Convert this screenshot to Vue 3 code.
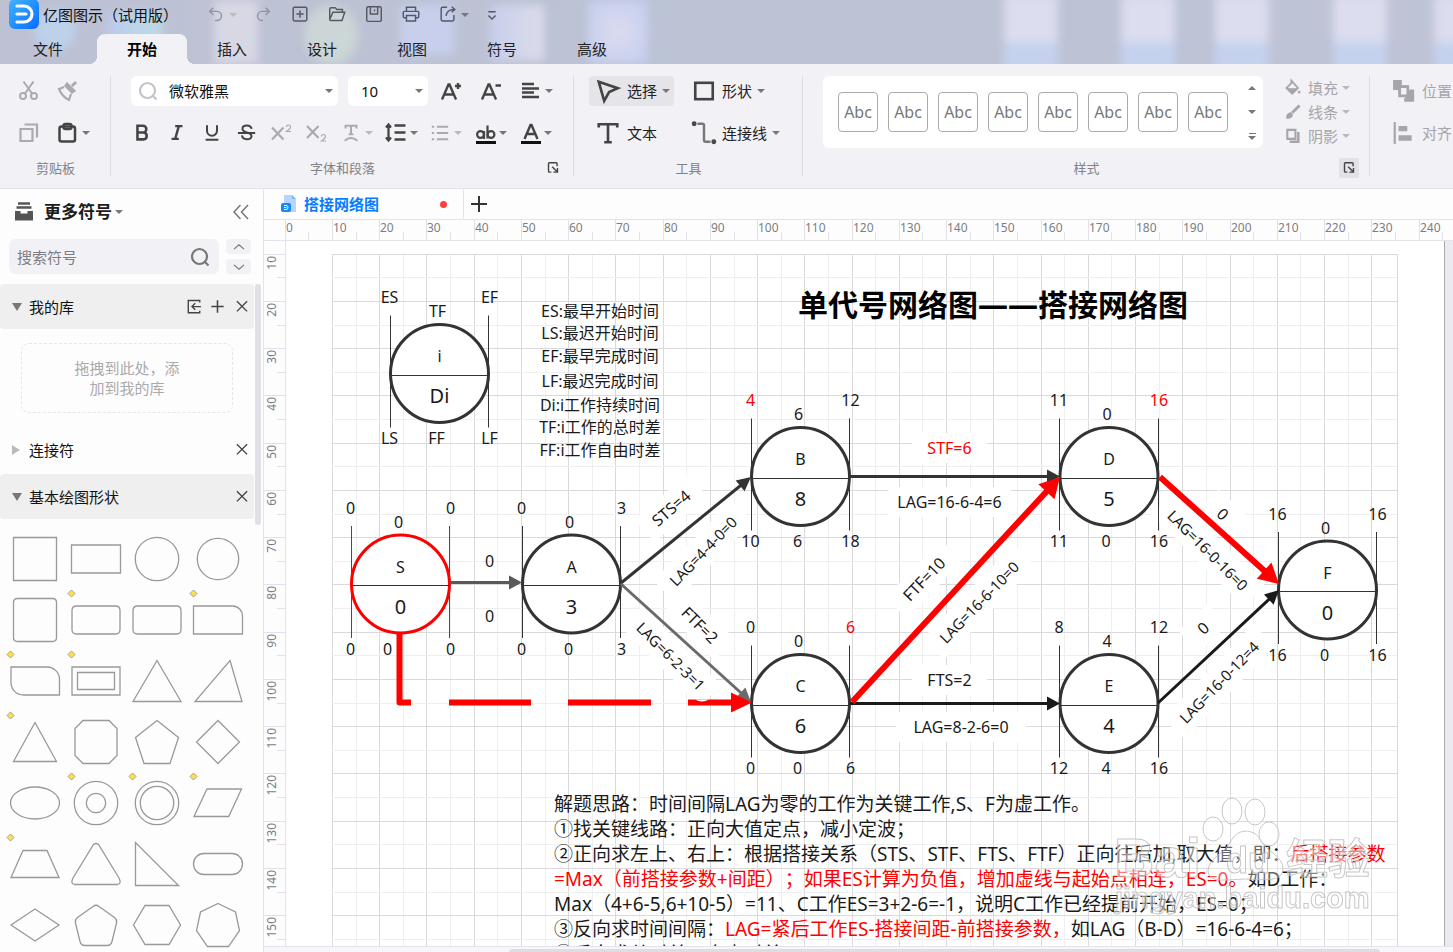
<script setup>
import { h } from 'vue'

const glyphs = {
  undo: '<path d="M7 2 3 6l4 4M3 6h8a5 5 0 0 1 0 10H9"/>',
  redo: '<path d="m13 2 4 4-4 4M17 6H9a5 5 0 0 0 0 10h1"/>',
  create: '<rect x="2.5" y="1.5" width="15" height="15" rx="1.5"/><path d="M10 5v8M6 9h8"/>',
  open: '<path d="M2 15V3.500q0-1.500 1.500-1.500H8l2 2h6v3M2 15q0 1 1 1h12.500l3-9H5.500L2 15"/>',
  save: '<rect x="2" y="1" width="16" height="16" rx="1.500"/><path d="M6 1v8h8V1M10.500 4v2"/>',
  print: '<path d="M5 6V1.500h10V6M5 13H2.500q-1 0-1-1V7q0-1 1-1h15q1 0 1 1v5q0 1-1 1H15M5 10.500h10v6H5z"/>',
  share: '<path d="M9 1.500H4q-1.500 0-1.500 1.500v12q0 1.500 1.500 1.500h11q1.500 0 1.500-1.500v-5M8 11c0-4 3-7 9-7M14 1l3.500 3L14 7"/>',
  more: '<path d="M6 6.500h8M6 10.500l4 4 4-4"/>',
  cut: '<g stroke-width="2"><circle cx="4" cy="15" r="3"/><circle cx="15" cy="15" r="3"/><path d="m4.500 .5 8.500 12M14.500 .5 6 12.500"/></g>',
  brush: '<path d="m18 1-4 4" stroke-width="3"/><path d="m9 2 8 8-3 2-7-7z" fill="currentColor"/><path d="m6 6-5 2c2 5 6 9 10 11l2-6" stroke-width="2.200"/>',
  copy: '<g stroke-width="2.200"><path d="M1.500 6h12v12h-12z"/><path d="M5.500 1.500h12.500v13" /></g>',
  paste: '<g stroke-width="2.500"><rect x="1.500" y="3.500" width="15.500" height="15" rx="2"/><rect x="5.500" y="1" width="8" height="5" rx="2"/></g>',
  search: '<circle cx="9.500" cy="9.500" r="7.500" stroke-width="2.200"/><path d="m15 15 3.500 3.500" stroke-width="2.200"/>',
  grow: '<path d="M0 18.500 6.500 3.500h1L14 18.500M2.500 13.500h9M13 5h6M16 2v6" stroke-width="2.400"/>',
  shrink: '<path d="M0 18.500 6.500 3.500h1L14 18.500M2.500 13.500h9M13.500 4.500h5.500" stroke-width="2.400"/>',
  align: '<path d="M0 3h12M0 7.500h17M0 11.500h12M0 16h17" stroke-width="2.600"/>',
  bold: '<path d="M5 2h6a3.700 3.700 0 0 1 0 7.500H5zM5 9.500h7a3.800 3.800 0 0 1 0 7.500H5z" stroke-width="2.800"/>',
  italic: '<path d="M8 2.500h8M4 16.500h8M12 2.500 8 16.500" stroke-width="2.600"/>',
  under: '<path d="M4.500 1.500v6a5.500 5.500 0 0 0 11 0v-6M3 17.500h14" stroke-width="2.200"/>',
  strike: '<path d="M15 5.500c-.5-5-10-5-10-.5C5 7.500 7 8.500 10 9.500c3 .8 5 1.500 5 4.200 0 4.500-10 4.500-10.500-1M0 10h19" stroke-width="2.200"/>',
  sup: '<path d="m0 4.500 11.500 12M11.500 4.500 0 16.500" stroke-width="2.200"/><path d="M14.500 4q0-2 2-2t2 2q0 1.500-4 4.500h4.500" stroke-width="1.200"/>',
  sub: '<path d="m0 3 11.500 12M11.500 3 0 15" stroke-width="2.200"/><path d="M14.500 13.500q0-2 2-2t2 2q0 1.500-4 4.500h4.500" stroke-width="1.200"/>',
  arc: '<path d="M4 5V2h12v3M10 2v9M7.500 11.500h5M3 18.500q7-6 14 0" stroke-width="2.200"/>',
  spacing: '<path d="M8.500 2.500h11M8.500 9.500h11M8.500 16.500h11M2.500 1.500v16M0 4.500l2.500-3 2.500 3M0 14.500l2.500 3 2.500-3" stroke-width="2.300"/>',
  list: '<path d="M6.500 3H19M6.500 10H19M6.500 17H19M1 3h2.500M1 10h2.500M1 17h2.500" stroke-width="2.200"/>',
  mark: '<path d="M1 19.500h20" stroke="#111" stroke-width="3"/><circle cx="5.500" cy="11.500" r="3.400" stroke-width="2.200"/><circle cx="16" cy="11.500" r="3.400" stroke-width="2.200"/><path d="M9 8v8M12.500 2.500v13" stroke-width="2.200"/>',
  tint: '<path d="M1 19.500h20" stroke="#111" stroke-width="3"/><path d="m4.500 16 6-14h1l6 14M7 11h8" stroke-width="2.400"/>',
  launch: '<path d="M15 8V4.500q0-1-1-1H5.500q-1 0-1 1V14q0 1 1 1H8M9 8.500l6.500 6.500M15.500 10v5h-5" stroke-width="1.700"/>',
  cursor: '<path d="M1.500 1.500 19 7.500l-8 3.500-4.500 8z" stroke-width="2.400"/>',
  square: '<rect x="2" y="2.500" width="16" height="15" stroke-width="2.400"/>',
  text: '<path d="M1.500 5V2h17v3M10 2v16.500M6.500 18.500h7" stroke-width="2.400"/>',
  link: '<circle cx="1" cy="1.500" r="1" stroke-width="2.500"/><circle cx="19" cy="18" r="1" stroke-width="2.500"/><path d="M4 1.500h4.500q1.500 0 1.500 1.500v13.500q0 1.500 1.500 1.500H16" stroke="#777" stroke-width="2.200"/>',
  fill: '<path d="m8 1 8 9-7 7-7-7 6-6z" stroke-width="2.200"/><path d="M3 11h12l-6 5.500z" fill="currentColor"/><path d="M17.500 13.500v3" stroke-width="3"/>',
  line: '<path d="m18 2-9 9" stroke-width="3.500"/><path d="M7 11q-5 1-4.500 6.500Q9 17.500 9 13z" fill="currentColor"/>',
  shadow: '<path d="M3 2.500h10v11H3z" stroke-width="2.500"/><path d="M16.500 5v12H6" stroke-width="3"/>',
  place: '<path d="M0 0h8v5h5v8H5V9H0z" fill="currentColor" stroke="none"/><path d="M6 6h7.500v8.500H6z" fill="#f2f1f6" stroke-width="2.500"/><path d="M15 9.500h3.500V19H11v-2.500" fill="currentColor"/>',
  sides: '<path d="M1.500 0v20" stroke-width="2"/><path d="M5 6h8M5 14.500h12" stroke-width="5"/>',
  box: '<path d="M4 1.500h12M2.500 5.500h15" stroke-width="2.400"/><path d="M1 9h5.500v2.500h7V9H19v9.500H1z" fill="currentColor" stroke="none"/>',
  collapse: '<path d="M9.500 3 3 10l6.500 7M17 3l-6.500 7 6.500 7" stroke-width="1.500"/>',
  up: '<path d="m3 13 7-6 7 6"/>',
  down: '<path d="m3 7 7 6 7-6"/>',
  imp: '<path d="M17 4.500V2H3v15h14v-2.500M18.500 9.500H8M11.500 5.500l-4 4 4 4" stroke-width="1.700"/>',
  plus: '<path d="M10 2v16M2 10h16" stroke-width="2"/>',
  close: '<path d="m3 2 14 14M17 2 3 16" stroke-width="1.900"/>',
}
const Ico = (p) => h('svg', { class: 'ico', viewBox: '-1 -1 22 22', width: p.s || 22, height: p.s || 22, 'aria-hidden': 'true', innerHTML: glyphs[p.n] })
Ico.props = ['n', 's']

const tabs = ['文件', '开始', '插入', '设计', '视图', '符号', '高级']
const styleRows = [['fill', '填充'], ['line', '线条'], ['shadow', '阴影']]

const shapes = [
  { d: 'M-21.500-21.500h43v43h-43z' }, { d: 'M-24.500-14h49v28h-49z' }, { r: [21.7] }, { r: [20.7] },
  { d: 'M-17.500-21.500h35q4 0 4 4v35q0 4-4 4h-35q-4 0-4-4v-35q0-4 4-4z' },
  { d: 'M-19.500-14h39q4.500 0 4.500 4.500v19q0 4.500-4.500 4.500h-39q-4.500 0-4.500-4.500v-19q0-4.500 4.500-4.500z', m: 1 },
  { d: 'M-19.500-14h39q4.500 0 4.500 4.500v19q0 4.500-4.500 4.500h-39q-4.500 0-4.500-4.500v-19q0-4.500 4.500-4.500z' },
  { d: 'M-24.500-14h39a10 10 0 0 1 10 10v18h-49z', m: 1 },
  { d: 'M-24-14h36a12.500 12.500 0 0 1 12.500 12.500v15.500h-36a12.500 12.500 0 0 1-12.500-12.500z', m: 1 },
  { d: 'M-24-14h48v28h-48zM-18.500-8.500h37v17h-37z', m: 1 },
  { d: 'M0-20.500 24 20.500h-48z' }, { d: 'M12-20.500 24 20.500h-47z' },
  { d: 'M0-19.500 21.500 19.500h-43z', m: 1 },
  { d: 'M-13-21.500h26l8 8v27l-8 8h-26l-8-8v-27z' },
  { d: 'M0-21.500 21.500-4.500 13 21.500h-26L-21.500-4.500z' }, { d: 'M0-21.500 21.500 0 0 21.500-21.500 0z' },
  { d: 'M-24.500 0a24.500 16 0 0 1 49 0a24.500 16 0 0 1-49 0' }, { r: [21.7, 9.7], m: 1 }, { r: [21.7, 16.7], m: 1 },
  { d: 'M-11-14h34.500L10.700 13.500H-24z', m: 1 },
  { d: 'M-12-13.500h24l12 27h-48z', m: 1 },
  { d: 'M-2.500-19.500q2.500-2 5 0L23 14q3 6-2 6.500h-42q-5-.5-2-6.500z' },
  { d: 'M-21.500-21.500v43h43z' }, { d: 'M-14-10.500h28a10.500 10.500 0 0 1 0 21h-28a10.500 10.500 0 0 1 0-21z' },
  { d: 'M0-16 24 0 0 16-24 0z' },
  { d: 'M-3-18.500q3-2.500 6 0L18.500-7.500q3 2.500 2 5.500L16 16.500q-1 4-5 4h-22q-4 0-5-4L-20.500-2q-1-3 2-5.500z' },
  { d: 'M-12-19.500h24L23.500 0 12 19.500h-24L-23.500 0z' },
  { d: 'M0-21.500 17.500-13l4 18.500-11 16h-21l-11-16 4-18.500z' },
]

const STEP = 47.244
const hx = (k) => Math.floor(285.2 + STEP * k)
const vy = (k) => Math.round(206.5 + STEP * k)
const hTicks = Array.from({ length: 25 }, (_, i) => ({ x: hx(i), half: hx(i + 0.5), v: i * 10 }))
const vTicks = Array.from({ length: 15 }, (_, i) => ({ y: vy(i + 1), half: vy(i + 1.5), v: (i + 1) * 10 }))
const gridX = Array.from({ length: 45 }, (_, i) => ({ p: hx(1 + i / 2), major: i % 2 === 0 }))
const gridY = Array.from({ length: 30 }, (_, i) => ({ p: vy(1 + i / 2), major: i % 2 === 0 }))

const nodes = [
  { x: 439.5, y: 373.5, n: 'i', v: 'Di', t: ['ES', 'TF', 'EF'], b: ['LS', 'FF', 'LF'] },
  { x: 400.5, y: 584, n: 'S', v: '0', t: ['0', '0', '0'], b: ['0', '0', '0'], red: true, mid: -13 },
  { x: 571.5, y: 584, n: 'A', v: '3', t: ['0', '0', '3'], b: ['0', '0', '3'] },
  { x: 800.5, y: 476.5, n: 'B', v: '8', t: ['4', '6', '12'], b: ['10', '6', '18'], hot: 0 },
  { x: 800.5, y: 703.5, n: 'C', v: '6', t: ['0', '0', '6'], b: ['0', '0', '6'], hot: 2 },
  { x: 1109, y: 476.5, n: 'D', v: '5', t: ['11', '0', '16'], b: ['11', '0', '16'], hot: 2 },
  { x: 1109, y: 703.5, n: 'E', v: '4', t: ['8', '4', '12'], b: ['12', '4', '16'] },
  { x: 1327.5, y: 590, n: 'F', v: '0', t: ['16', '0', '16'], b: ['16', '0', '16'] },
]
const offs = (n, i, bottom) => n.x + [-50, bottom ? n.mid || -3 : -2, 50][i]

const edge = (x1, y1, x2, y2, c, w, len, half) => {
  const L = Math.hypot(x2 - x1, y2 - y1)
  const a = (Math.atan2(y2 - y1, x2 - x1) * 180) / Math.PI
  return { x1, y1, a, L, c, w, len, half }
}
const edges = [
  edge(450, 582.5, 522, 582.5, '#595959', 3, 13, 7),
  edge(621, 583, 751, 477, '#333', 3, 14, 7),
  edge(621, 584, 751, 702, '#6a6a6a', 3, 14, 7),
  edge(850, 476.5, 1060, 476.5, '#333', 3, 13, 7),
  edge(850, 703.5, 1060, 703.5, '#1a1a1a', 3, 13, 7),
  edge(1158, 703, 1279, 590, '#1a1a1a', 3, 14, 7),
  edge(852, 702, 1060, 477, '#f00', 6, 20, 11),
  edge(1160, 477, 1279, 584, '#f00', 6, 20, 11),
]
const labels = [
  { x: 489.5, y: 561, t: '0' }, { x: 489.5, y: 616, t: '0' },
  { x: 671, y: 508, t: 'STS=4', a: -41, w: 70 }, { x: 703, y: 551, t: 'LAG=4-4-0=0', a: -46, w: 112, sm: true },
  { x: 700, y: 625, t: 'FTF=2', a: 45, w: 70 }, { x: 671, y: 656, t: 'LAG=6-2-3=1', a: 45, w: 112, sm: true },
  { x: 949.5, y: 448, t: 'STF=6', w: 75, red: true }, { x: 949.5, y: 502, t: 'LAG=16-6-4=6', w: 122 },
  { x: 924, y: 579, t: 'FTF=10', a: -46, w: 80 }, { x: 979, y: 602, t: 'LAG=16-6-10=0', a: -46, w: 130, sm: true },
  { x: 949.5, y: 680, t: 'FTS=2', w: 75 }, { x: 961, y: 727, t: 'LAG=8-2-6=0', w: 130 },
  { x: 1223, y: 514, t: '0', a: 43, w: 40 }, { x: 1208, y: 550, t: 'LAG=16-0-16=0', a: 45, w: 130, sm: true },
  { x: 1203, y: 628, t: '0', a: -43, w: 40 }, { x: 1219, y: 682, t: 'LAG=16-0-12=4', a: -46, w: 130, sm: true },
]
const legend = [
  [311, 'ES:最早开始时间'], [333, 'LS:最迟开始时间'], [356, 'EF:最早完成时间'], [381, 'LF:最迟完成时间'],
  [405, 'Di:i工作持续时间'], [427, 'TF:i工作的总时差'], [450, 'FF:i工作自由时差'],
]
</script>

<template>
  <div class="app">
    <header class="top">
      <div class="blobs" aria-hidden="true"><i v-for="n in 12" :key="n" :class="'b' + n"></i></div>
      <div class="title">
        <svg class="logo" width="30" height="30" viewBox="0 0 30 30" aria-hidden="true">
          <defs><linearGradient id="lg" x1="0" y1="0" x2="1" y2="1"><stop offset="0" stop-color="#3fb4ff" /><stop offset="1" stop-color="#0a6cff" /></linearGradient></defs>
          <rect width="30" height="30" rx="6" fill="url(#lg)" />
          <path d="M8 7h7a8 8 0 0 1 0 16H8M8 15h9" fill="none" stroke="#fff" stroke-width="3.200" stroke-linecap="round" />
        </svg>
        <h1>亿图图示（试用版）</h1>
        <nav class="quick">
          <button class="q dim" aria-label="撤销"><Ico n="undo" s="20" /><b class="car"></b></button>
          <button class="q dim" aria-label="重做"><Ico n="redo" s="20" /></button>
          <button class="q" aria-label="新建"><Ico n="create" s="20" /></button>
          <button class="q" aria-label="打开"><Ico n="open" s="20" /></button>
          <button class="q" aria-label="保存"><Ico n="save" s="20" /></button>
          <button class="q" aria-label="打印"><Ico n="print" s="20" /></button>
          <button class="q exp" aria-label="导出"><Ico n="share" s="20" /><b class="car"></b></button>
          <button class="q" aria-label="更多"><Ico n="more" s="20" /></button>
        </nav>
      </div>
      <nav class="tabs">
        <button v-for="t in tabs" :key="t" :class="{ on: t === '开始' }">{{ t }}</button>
      </nav>
    </header>

    <section class="ribbon">
      <div class="group clip">
        <div class="rows">
          <div class="row"><button class="ib dim" aria-label="剪切"><Ico n="cut" /></button><button class="ib dim" aria-label="格式刷"><Ico n="brush" /></button></div>
          <div class="row"><button class="ib dim" aria-label="复制"><Ico n="copy" /></button><button class="ib cc" aria-label="粘贴"><Ico n="paste" /><b class="car"></b></button></div>
        </div>
        <footer>剪贴板</footer>
      </div>
      <div class="group font">
        <div class="rows">
          <div class="row">
            <label class="combo name"><Ico n="search" /><select aria-label="字体"><option>微软雅黑</option></select><b class="car"></b></label>
            <label class="combo size"><select aria-label="字号"><option>10</option></select><b class="car"></b></label>
            <button class="ib" aria-label="增大"><Ico n="grow" /></button>
            <button class="ib" aria-label="减小"><Ico n="shrink" /></button>
            <button class="ib cc" aria-label="对齐方式"><Ico n="align" /><b class="car"></b></button>
          </div>
          <div class="row tight">
            <button class="ib" aria-label="加粗"><Ico n="bold" s="20" /></button>
            <button class="ib" aria-label="斜体"><Ico n="italic" s="20" /></button>
            <button class="ib" aria-label="下划线"><Ico n="under" s="20" /></button>
            <button class="ib" aria-label="删除线"><Ico n="strike" s="20" /></button>
            <button class="ib dim" aria-label="上标"><Ico n="sup" /></button>
            <button class="ib dim" aria-label="下标"><Ico n="sub" /></button>
            <button class="ib cc dim" aria-label="弧形文字"><Ico n="arc" s="20" /><b class="car"></b></button>
            <button class="ib cc" aria-label="行距"><Ico n="spacing" /><b class="car"></b></button>
            <button class="ib cc dim" aria-label="项目符号"><Ico n="list" s="20" /><b class="car"></b></button>
            <button class="ib cc" aria-label="突出显示"><Ico n="mark" /><b class="car"></b></button>
            <button class="ib cc" aria-label="字体颜色"><Ico n="tint" /><b class="car"></b></button>
          </div>
        </div>
        <footer>字体和段落<button class="go" aria-label="字体设置"><Ico n="launch" s="18" /></button></footer>
      </div>
      <div class="group tools">
        <div class="rows">
          <div class="row"><button class="tb sel"><Ico n="cursor" s="24" />选择<b class="car"></b></button><button class="tb two"><Ico n="square" s="24" />形状<b class="car"></b></button></div>
          <div class="row"><button class="tb first"><Ico n="text" s="24" />文本</button><button class="tb two"><Ico n="link" s="24" />连接线<b class="car"></b></button></div>
        </div>
        <footer>工具</footer>
      </div>
      <div class="group styles">
        <div class="rows side">
          <div class="gallery">
            <button v-for="n in 8" :key="n" class="sw">Abc</button>
            <div class="spin"><button aria-label="上"><b class="car flip"></b></button><button aria-label="下"><b class="car"></b></button><button aria-label="展开" class="bar"><b class="car"></b></button></div>
          </div>
          <div class="stack">
            <button v-for="r in styleRows" :key="r[0]"><Ico :n="r[0]" s="18" />{{ r[1] }}<b class="car"></b></button>
          </div>
        </div>
        <footer>样式<button class="go grey" aria-label="样式设置"><Ico n="launch" s="18" /></button></footer>
      </div>
      <div class="group arrange">
        <div class="rows">
          <div class="row"><button class="tb dim"><Ico n="place" s="24" />位置</button></div>
          <div class="row"><button class="tb dim"><Ico n="sides" s="24" />对齐</button></div>
        </div>
      </div>
    </section>

    <main class="work">
      <aside class="side-panel">
        <div class="lib-head"><Ico n="box" /><h2>更多符号</h2><b class="car"></b><button aria-label="收起"><Ico n="collapse" /></button></div>
        <div class="find">
          <label><input type="text" placeholder="搜索符号" aria-label="搜索符号" /><Ico n="search" /></label>
          <div class="ud"><button aria-label="上一个"><Ico n="up" s="16" /></button><button aria-label="下一个"><Ico n="down" s="16" /></button></div>
        </div>
        <div class="lists">
          <div class="sec grey"><b class="tri"></b><h3>我的库</h3><button aria-label="导入"><Ico n="imp" s="18" /></button><button aria-label="添加"><Ico n="plus" s="17" /></button><button aria-label="关闭"><Ico n="close" s="16" /></button></div>
          <p class="drop">拖拽到此处，添<br />加到我的库</p>
          <div class="sec"><b class="tri shut"></b><h3>连接符</h3><button aria-label="关闭"><Ico n="close" s="16" /></button></div>
          <div class="sec grey"><b class="tri"></b><h3>基本绘图形状</h3><button aria-label="关闭"><Ico n="close" s="16" /></button></div>
          <div class="shapes">
            <svg v-for="(s, i) in shapes" :key="i" viewBox="-31 -30 61 61">
              <path v-if="s.d" :d="s.d" /><circle v-for="r in s.r || []" :key="r" :r="r" />
              <path v-if="s.m" class="mk" d="M-24.500-30l3.500 3.500-3.500 3.500-3.500-3.500z" />
            </svg>
          </div>
          <div class="thumb"></div>
        </div>
      </aside>

      <section class="doc">
        <div class="doctabs">
          <button class="dt">
            <svg width="16" height="18" viewBox="0 0 16 18" aria-hidden="true"><path d="M3 0h8l4 4v13H3z" fill="#b5d5fb" /><path d="M11 0l4 4h-4z" fill="#7fb4f5" /><rect x="0" y="8" width="10" height="9" rx="2" fill="#1b86f5" /><path d="M3 10.500h2a2 2 0 0 1 0 4H3M3 12.500h2.500" fill="none" stroke="#fff" /></svg>
            <span>搭接网络图</span><i class="dot"></i>
          </button>
          <button class="add" aria-label="新建页面"><Ico n="plus" /></button>
        </div>
        <div class="hr">
          <svg width="1168" height="21" viewBox="285 220 1168 21" aria-hidden="true">
            <g v-for="t in hTicks" :key="t.v"><path :d="`M${t.x + 0.5} 220v20M${t.half + 0.5} 232v8`" /><text :x="t.x + 1" y="232">{{ t.v }}</text></g>
          </svg>
        </div>
        <div class="mid">
          <div class="vr">
            <svg width="21" height="706" viewBox="264 241 21 706" aria-hidden="true">
              <g v-for="t in vTicks" :key="t.v"><path :d="`M264 ${t.y + 0.5}h21M277 ${t.half + 0.5}h8`" /><text :transform="`translate(276 ${t.y + 2}) rotate(-90)`" text-anchor="end">{{ t.v }}</text></g>
            </svg>
          </div>
          <div class="stage">
            <div class="page">
              <svg class="draw" width="1158" height="706" viewBox="286 241 1158 706">
                <path v-for="g in gridX" :key="'x' + g.p" :d="`M${g.p + 0.5} 254V947`" :class="g.major ? 'maj' : 'min'" />
                <path v-for="g in gridY" :key="'y' + g.p" :d="`M332 ${g.p + 0.5}H1397`" :class="g.major ? 'maj' : 'min'" />
                <path class="maj" d="M1397.500 254V947" />
                <text class="big" x="993" y="316">单代号网络图——搭接网络图</text>
                <text v-for="l in legend" :key="l[0]" class="mid-t" x="600" :y="l[0] + 6">{{ l[1] }}</text>
                <template v-for="(l, i) in labels" :key="'bg' + i">
                  <rect v-if="l.w" class="bg" :x="-l.w / 2" y="-15" :width="l.w" height="30" :transform="`translate(${l.x} ${l.y}) rotate(${l.a || 0})`" />
                </template>
                <g v-for="n in nodes" :key="n.n">
                  <circle :cx="n.x" :cy="n.y" r="49" class="ring" :class="{ red: n.red }" />
                  <path class="bars" :class="{ red: n.red }" :d="`M${Math.floor(n.x - 49.5) + 0.5} ${n.y - 58}v112M${Math.floor(n.x + 49) + 0.5} ${n.y - 58}v112`" />
                  <path class="bars" :d="`M${n.x - 49} ${Math.round(n.y + 2) - 0.5}h98`" />
                  <text class="mid-t" :x="n.x" :y="Math.floor(n.y - 11)">{{ n.n }}</text>
                  <text class="mid-t val" :x="n.x" :y="Math.floor(n.y + 30)">{{ n.v }}</text>
                  <text v-for="(t, i) in n.t" :key="'t' + i" class="mid-t" :class="{ hot: n.hot === i }" :x="offs(n, i)" :y="Math.floor(n.y) - (i === 1 ? 56 : 70)">{{ t }}</text>
                  <text v-for="(t, i) in n.b" :key="'b' + i" class="mid-t" :x="offs(n, i, true)" :y="Math.floor(n.y) + 71">{{ t }}</text>
                </g>
                <g v-for="(e, i) in edges" :key="'e' + i" :transform="`translate(${e.x1} ${e.y1}) rotate(${e.a})`" :fill="e.c">
                  <rect x="0" :y="-e.w / 2" :width="e.L - e.len + 1" :height="e.w" />
                  <path :d="`M${e.L} 0l${-e.len}${-e.half}v${e.half * 2}z`" />
                </g>
                <path d="M399.500 633V702.500H411M449 702.500H531M568 702.500H651M688 702.500H733" class="dash" />
                <path d="M695 699.500q7 4 14 0z" class="bg" />
                <path d="M752 702.500l-21-10v20z" fill="#f00" />
                <text v-for="(l, i) in labels" :key="'l' + i" class="mid-t" :class="{ hot: l.red, sm: l.sm }" y="6" :transform="`translate(${l.x} ${l.y}) rotate(${l.a || 0})`">{{ l.t }}</text>
              </svg>
              <div class="note">
                <p>解题思路：时间间隔LAG为零的工作为关键工作,S、F为虚工作。</p>
                <p>①找关键线路：正向大值定点，减小定波；</p>
                <p>②正向求左上、右上：根据搭接关系（STS、STF、FTS、FTF）正向往后加,取大值，即：<em>后搭接参数</em></p>
                <p><em>=Max（前搭接参数+间距）；如果ES计算为负值，增加虚线与起始点相连，ES=0。</em>如D工作：</p>
                <p>Max（4+6-5,6+10-5）=11、C工作ES=3+2-6=-1，说明C工作已经提前开始，ES=0；</p>
                <p>③反向求时间间隔：<em>LAG=紧后工作ES-搭接间距-前搭接参数，</em>如LAG（B-D）=16-6-4=6；</p>
                <p>④反向求总时差：自由时差</p>
              </div>
              <svg class="mark" width="280" height="136" viewBox="0 0 280 136" aria-hidden="true">
                <path d="M94 84c0-12 15-17 22-28 6-15 24-16 31-2 6 11 22 15 22 28-1 13-16 11-38 10-21 1-36 4-37-8z" class="pad" />
                <text x="0" y="90" class="wm w1">Bai</text><text x="112" y="86" class="wm w3">du</text><text x="172" y="87" class="wm w2">经验</text>
                <text x="1" y="121" class="wm w4">jingyan.baidu.com</text>
                <ellipse cx="99" cy="42" rx="10" ry="12" /><ellipse cx="118" cy="24" rx="10" ry="13" /><ellipse cx="141" cy="25" rx="10" ry="13" /><ellipse cx="155" cy="47" rx="10" ry="12" />
              </svg>
            </div>
          </div>
        </div>
        <div class="hscroll"><i></i></div>
      </section>
    </main>
  </div>
</template>

<style>
html, body { height: 100%; overflow: hidden; }
</style>

<style scoped>
.app { height: 100vh; display: flex; flex-direction: column; overflow: hidden; background: #fff; color: #1c1c1c; font: 15px/20px "Noto Sans", "Noto Sans CJK SC", sans-serif; }
button { border: 0; background: none; padding: 0; margin: 0; font: inherit; color: inherit; display: flex; align-items: center; }
h1, h2, h3, p { margin: 0; font-weight: 400; font-size: inherit; }
:deep(.ico) { fill: none; stroke: currentColor; stroke-width: 1.6; flex: none; overflow: visible; }
.car { width: 0; height: 0; flex: none; border: 4px solid transparent; border-top-color: #777; border-bottom: 0; }
.dim { color: #aaaaaf; }
.dim .car { border-top-color: #bbb; }
.flip { transform: rotate(180deg); }

.top { position: relative; height: 64px; flex: none; overflow: hidden; background: linear-gradient(90deg, #bec1d4, #bbc3d4 50%, #bfc3d6); }
.blobs i { position: absolute; top: -5px; width: 54px; height: 48px; background: #dcdff0; filter: blur(5px); }
.blobs .b1 { left: 34px; top: 10px; width: 42px; height: 40px; background: #bdd1ea; border-radius: 50%; }
.blobs .b2 { left: 108px; top: 12px; height: 36px; background: linear-gradient(90deg, #bccbee, #bbdce5); }
.blobs .b3 { left: 214px; top: 0; width: 44px; height: 64px; background: #d8d8e5; }
.blobs .b4 { left: 304px; top: 5px; height: 60px; background: #ccd6d6; border-radius: 50%; }
.blobs .b5 { left: 400px; top: 5px; height: 50px; background: #c7cfec; }
.blobs .b6 { left: 490px; top: 5px; height: 56px; background: linear-gradient(90deg, #c8cfec, #dcdcea); }
.blobs .b7 { left: 588px; top: 0; width: 60px; height: 64px; background: radial-gradient(#dcdcee, #c3ccef); }
.blobs .b8, .blobs .b9, .blobs .b10, .blobs .b11, .blobs .b12 { height: 75px; background: linear-gradient(#dcddee 60%, #c5d2ee 66%); }
.blobs .b8 { left: 1004px; }
.blobs .b9 { left: 1121px; }
.blobs .b10 { left: 1215px; }
.blobs .b11 { left: 1333px; }
.blobs .b12 { left: 1434px; }
.title { position: relative; height: 29px; display: flex; align-items: center; padding-left: 9px; }
.logo { margin-top: -2px; }
h1 { margin-left: 4px; width: 163px; color: #111; }
.quick { display: flex; gap: 17px; color: #555962; }
.q { width: 20px; position: relative; }
.q .car { position: absolute; left: 23px; top: 8px; }
.q.dim { color: #9194a2; }
.q:first-child { margin-right: 10px; }
.exp { margin-right: 7px; }
.tabs { position: relative; display: flex; padding: 5px 0 0 3px; }
.tabs button { width: 90px; height: 30px; justify-content: center; position: relative; color: #222; }
.tabs .on { background: #f2f1f6; border-radius: 8px 8px 0 0; font-weight: 700; color: #000; margin-left: 4px; margin-right: -4px; }
.tabs .on + button { margin-left: 0; }
.tabs .on::before, .tabs .on::after { content: ""; position: absolute; bottom: 0; width: 8px; height: 8px; left: -8px; background: radial-gradient(circle at 0 0, transparent 8px, #f2f1f6 8px); }
.tabs .on::after { left: auto; right: -8px; background: radial-gradient(circle at 100% 0, transparent 8px, #f2f1f6 8px); }
.tabs .on ~ button { transform: none; }
.tabs .on { margin-right: 0; }

.ribbon { height: 124px; flex: none; display: flex; background: #f2f1f6; border-bottom: 1px solid #e4e3ea; overflow: hidden; color: #444; }
.group { flex: none; height: 114px; position: relative; display: flex; flex-direction: column; box-sizing: border-box; padding-top: 12px; }
.group:not(:last-child)::after { content: ""; position: absolute; right: 0; top: 12px; bottom: 2px; width: 1px; background: #dddce3; }
.rows { display: flex; flex-direction: column; gap: 12px; height: 83px; }
.row { display: flex; align-items: center; height: 30px; }
footer { display: flex; justify-content: center; align-items: center; height: 20px; margin-top: 2px; color: #828286; font-size: 13px; position: relative; }
.ib { width: 22px; height: 26px; position: relative; justify-content: center; }
.cc .car { position: absolute; left: 25px; }
.clip { width: 111px; padding-left: 18px; }
.clip .row { gap: 17px; }
.clip footer { margin-left: -18px; }
.font { width: 463px; padding-left: 20px; }
.font footer { margin-left: -20px; }
.combo { display: flex; align-items: center; height: 30px; background: #fff; border-radius: 6px; box-sizing: border-box; padding-right: 5px; margin-right: 10px; }
.combo select { appearance: none; border: 0; background: none; font: inherit; color: #111; flex: 1; min-width: 0; padding: 0; outline: 0; }
.combo .ico { color: #c4c4c8; margin: 0 10px 0 6px; }
.name { width: 207px; }
.size { width: 80px; padding-left: 13px; }
.font .row .combo + .ib { margin-left: 3px; }
.font .row:first-child .ib { margin-right: 18px; }
.font .row:first-child .cc .car { left: 24px; }
.tight { gap: 13px; }
.tight .cc { margin-right: 10px; }
.tight .ib:nth-child(7), .tight .ib:nth-child(9) { margin-left: -1px; }
.go { position: absolute; right: 11px; width: 20px; height: 20px; justify-content: center; color: #444; }
.grey { background: #e3e2e8; }
.tools { width: 229px; padding-left: 15px; }
.tools footer { margin-left: -15px; }
.tools .row { gap: 15px; }
.tb { height: 30px; color: #222; white-space: nowrap; }
.tb .ico { margin: 0 7px 0 7px; color: #444; }
.tb .car { margin-left: 5px; }
.sel { background: #e5e4e9; border-radius: 4px; width: 85px; }
.first { width: 85px; }
.two .ico { margin: 0 6px 0 3px; }
.tb.dim, .tb.dim .ico { color: #a5a5aa; }
.styles { width: 567px; padding-left: 20px; }
.styles footer { margin-left: -20px; }
.side { flex-direction: row; gap: 21px; }
.gallery { width: 440px; height: 72px; background: #fff; border-radius: 6px; display: flex; align-items: center; gap: 10px; padding-left: 15px; box-sizing: border-box; }
.sw { width: 40px; height: 40px; border: 1px solid #aaa; border-radius: 4px; box-sizing: border-box; justify-content: center; color: #777; font-size: 16px; flex: none; }
.spin { display: flex; flex-direction: column; height: 72px; width: 20px; margin-left: 4px; }
.spin button { flex: 1; justify-content: center; }
.spin .bar { flex-direction: column; gap: 2px; }
.bar::before { content: ""; width: 7px; height: 1px; background: #777; }
.stack { display: flex; flex-direction: column; color: #a5a5aa; height: 72px; }
.stack button { height: 24px; gap: 6px; }
.stack .car { border-top-color: #bbb; margin-left: -2px; }
.arrange { padding-left: 15px; }
.arrange .ico { margin-right: 6px; }

.work { flex: 1; display: flex; min-height: 0; }
.side-panel { width: 263px; flex: none; border-right: 1px solid #e4e3ea; overflow: hidden; background: #fdfdfe; }
.lib-head { height: 46px; display: flex; align-items: center; padding: 0 11px 0 13px; color: #555; }
h2 { font-size: 17px; font-weight: 700; color: #1c1c1c; margin: 0 3px 0 9px; }
.lib-head button { margin-left: auto; color: #777; }
.find { display: flex; gap: 7px; padding: 4px 0 0 9px; height: 45px; }
.find label { width: 210px; height: 35px; background: #f2f1f6; border-radius: 6px; display: flex; align-items: center; box-sizing: border-box; padding: 0 8px; color: #777; }
.find input { border: 0; background: none; flex: 1; min-width: 0; font: inherit; padding: 0; outline: 0; }
.find input::placeholder { color: #7d7d82; opacity: 1; }
.ud { display: flex; flex-direction: column; gap: 5px; }
.ud button { width: 25px; height: 15px; background: #f2f1f6; border-radius: 4px; justify-content: center; color: #777; }
.lists { position: relative; }
.sec { display: flex; align-items: center; width: 254px; height: 45px; border-radius: 4px; box-sizing: border-box; padding: 0 4px 0 12px; gap: 7px; }
.sec.grey { background: #efefef; }
.sec button { width: 17px; justify-content: center; color: #444; }
.sec h3 { flex: 1; color: #111; }
.tri { border: 5px solid transparent; border-top: 8px solid #777; border-bottom: 0; }
.tri.shut { border: 5px solid transparent; border-left: 8px solid #bbb; border-right: 0; margin-right: 2px; }
.drop { width: 212px; height: 70px; margin: 14px 0 14px 21px; border: 1px dashed #e6e6ea; border-radius: 8px; box-sizing: border-box; text-align: center; padding-top: 14px; color: #aaa; }
.lists > .sec:nth-child(3) { height: 45px; margin-bottom: 2px; }
.shapes { display: grid; grid-template-columns: repeat(4, 61px); padding: 10px 0 0 4px; }
.shapes svg { width: 61px; height: 61px; fill: none; stroke: #999; stroke-width: 1.3; overflow: visible; }
.shapes .mk { fill: #ffe04a; stroke: #a8a08a; stroke-width: 1; }
.thumb { position: absolute; left: 255px; top: 0; width: 6px; height: 241px; border-radius: 3px; background: #e1e0e7; }

.doc { flex: 1; min-width: 0; display: flex; flex-direction: column; }
.doctabs { height: 30px; flex: none; display: flex; border-bottom: 1px solid #e4e3ea; background: #fdfdfe; }
.dt { width: 200px; box-sizing: border-box; border-right: 1px solid #e4e3ea; padding: 0 16px 0 17px; color: #0a7cff; font-weight: 700; gap: 7px; }
.dot { width: 7px; height: 7px; border-radius: 50%; background: #ff4040; margin-left: auto; }
.add { padding-left: 4px; color: #333; }
.hr { height: 20px; flex: none; border-bottom: 1px solid #e4e3ea; padding-left: 21px; overflow: hidden; background: #fdfdfe; }
.hr svg, .vr svg { display: block; stroke: none; }
.hr path, .vr path { stroke: #e2e1e9; fill: none; }
.hr text, .vr text { font-size: 12px; fill: #7d7d82; stroke: none; }
.mid { flex: 1; min-height: 0; display: flex; overflow: hidden; }
.vr { width: 21px; flex: none; border-right: 1px solid #e4e3ea; background: #fdfdfe; }
.stage { flex: 1; min-width: 0; overflow: hidden; background: #ebeaf0; }
.page { position: relative; width: 1158px; height: 706px; background: #fff; border-right: 1px solid #aaa; overflow: hidden; }
.draw { display: block; }
.maj { stroke: #dadadc; fill: none; }
.min { stroke: #efeff0; fill: none; }
.mid-t { font-size: 16px; text-anchor: middle; fill: #1a1a1a; }
.sm { font-size: 15px; }
.val { font-size: 20px; }
.big { font-size: 30px; font-weight: 700; text-anchor: middle; fill: #000; }
.hot { fill: #f00; }
.bg { fill: #fff; }
.ring { fill: #fff; stroke: #333; stroke-width: 3; }
.bars { stroke: #333; stroke-width: 1; fill: none; }
.ring.red, .bars.red { stroke: #f00; }
.dash { stroke: #f00; stroke-width: 6; fill: none; stroke-linejoin: round; }
.note { position: absolute; left: 268px; top: 551px; font-size: 19px; line-height: 25px; color: #1a1a1a; white-space: nowrap; text-spacing-trim: space-all; }
.note em { font-style: normal; color: #f00; }
.mark { position: absolute; left: 828px; top: 546px; opacity: 0.85; }
.wm, .mark ellipse, .mark path { fill: #fff; fill-opacity: 0.55; stroke: #bdbdbd; stroke-width: 1; }
.mark .pad { fill-opacity: 0.4; }
.wm { font-weight: 700; font-family: "Liberation Sans", "Noto Sans CJK SC", sans-serif; }
.w1 { font-size: 56px; }
.w2 { font-size: 42px; }
.w3 { font-size: 36px; }
.w4 { font-size: 29px; }
.hscroll { height: 5px; flex: none; border-top: 1px solid #e4e3ea; background: #f7f6fa; }
.hscroll i { display: block; width: 871px; height: 4px; margin: 2px 0 0 245px; background: #dddde2; border-radius: 4px 4px 0 0; }
</style>
